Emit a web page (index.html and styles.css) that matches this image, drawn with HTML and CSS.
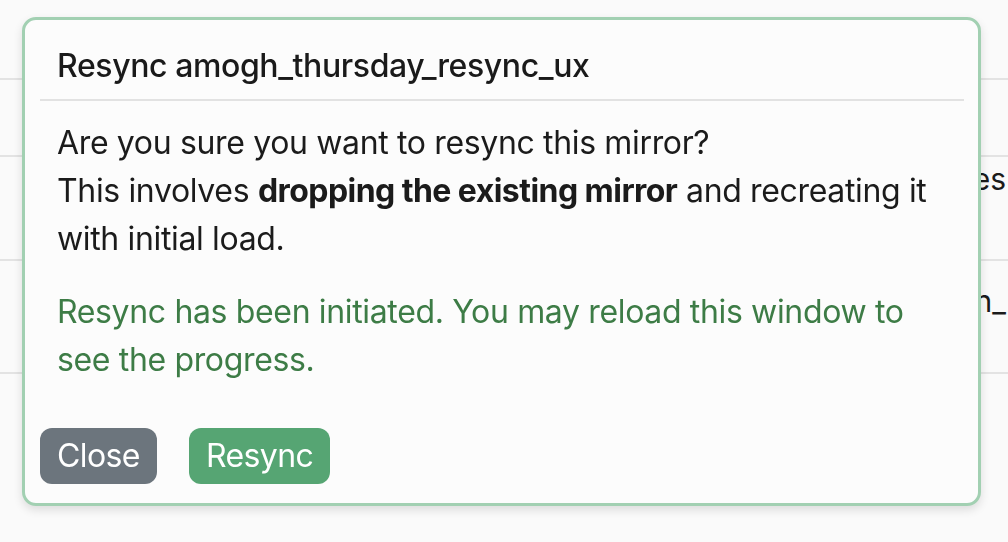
FILE: index.html
```html
<!DOCTYPE html>
<html lang="en">
<head>
<meta charset="utf-8">
<title>Resync mirror</title>
<link rel="stylesheet" href="styles.css">
</head>
<body>
<div class="table">
  <div class="row row-head"></div>
  <div class="row row-a"></div>
  <div class="row row-b"><span class="cell-text">Yes</span></div>
  <div class="row row-c"><span class="cell-text cell-low">run_</span></div>
  <div class="row row-d"></div>
</div>

<div class="modal" role="dialog">
  <div class="modal-header">
    <h2 class="modal-title">Resync amogh_thursday_resync_ux</h2>
  </div>
  <div class="modal-body">
    <p class="confirm">Are you sure you want to resync this mirror?<br>This involves <strong>dropping the existing mirror</strong> and recreating it with initial load.</p>
    <p class="status">Resync has been initiated. You may reload this window to see the progress.</p>
  </div>
  <div class="modal-footer">
    <button class="btn btn-close" type="button">Close</button>
    <button class="btn btn-resync" type="button">Resync</button>
  </div>
</div>
</body>
</html>
```

FILE: styles.css
```css
html, body {
  margin: 0;
  padding: 0;
}

body {
  background: #fafafa;
  font-family: Inter, "Noto Sans", "Liberation Sans", sans-serif;
  color: #1b1b1b;
  width: 1008px;
  height: 542px;
  overflow: hidden;
}

.table {
  display: flex;
  flex-direction: column;
}

.row {
  border-bottom: 2px solid #e3e3e3;
  display: flex;
  justify-content: flex-end;
  font-size: 30px;
  line-height: 36px;
  overflow: hidden;
}

.row-head { height: 78px; }
.row-a { height: 75px; }
.row-b { height: 102px; }
.row-c { height: 111px; }
.row-d { height: 160px; border-bottom: none; }

.cell-text {
  margin-top: 4px;
  margin-right: 2px;
  white-space: nowrap;
}

.cell-low {
  margin-top: 22px;
}

.modal {
  position: fixed;
  left: 22px;
  top: 17px;
  width: 959px;
  height: 489px;
  box-sizing: border-box;
  border: 3px solid #a2d0b2;
  border-radius: 14px;
  background: #fcfcfc;
  box-shadow: 0 4px 10px rgba(0, 0, 0, 0.12);
  padding: 0 14px 0 15px;
  display: flex;
  flex-direction: column;
}

.modal-header {
  padding: 22px 17px 9px;
  border-bottom: 2px solid #e2e2e2;
}

.modal-title {
  margin: 0;
  font-size: 32px;
  line-height: 48px;
  font-weight: 500;
  letter-spacing: -0.4px;
  color: #1a1a1a;
}

.modal-body {
  padding: 18px 17px 0;
  font-size: 32px;
  line-height: 48px;
  letter-spacing: -0.35px;
}

.modal-body p {
  margin: 0;
}

.confirm strong {
  font-weight: 700;
  letter-spacing: -0.55px;
}

.status {
  margin-top: 25px !important;
  color: #3d7c46;
}

.modal-footer {
  margin-top: 44px;
  display: flex;
  gap: 32px;
}

.btn {
  font-family: inherit;
  font-size: 32px;
  line-height: 48px;
  letter-spacing: -0.6px;
  padding: 4px 17px;
  border: none;
  border-radius: 12px;
  color: #ffffff;
  cursor: pointer;
}

.btn-close {
  background: #6c757d;
}

.btn-resync {
  background: #56a573;
}
```
